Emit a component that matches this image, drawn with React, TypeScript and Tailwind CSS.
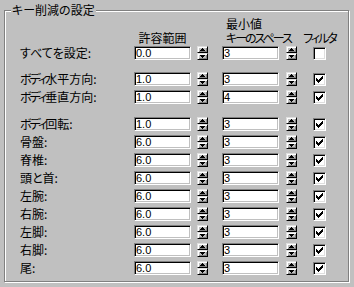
import React from 'react';

type Row = { label: React.ReactNode; key: string; tol: string; space: string; filter: boolean };

const Bodi = () => <span className="tracking-[-2px]">ボディ</span>;

const groups: Row[][] = [
  [{ key: 'all', label: 'すべてを設定:', tol: '0.0', space: '3', filter: false }],
  [
    { key: 'h', label: <><Bodi />水平方向:</>, tol: '1.0', space: '3', filter: true },
    { key: 'v', label: <><Bodi />垂直方向:</>, tol: '1.0', space: '4', filter: true },
  ],
  [
    { key: 'r', label: <><Bodi />回転:</>, tol: '1.0', space: '3', filter: true },
    { key: 'p', label: '骨盤:', tol: '6.0', space: '3', filter: true },
    { key: 's', label: '脊椎:', tol: '6.0', space: '3', filter: true },
    { key: 'n', label: '頭と首:', tol: '6.0', space: '3', filter: true },
    { key: 'la', label: '左腕:', tol: '6.0', space: '3', filter: true },
    { key: 'ra', label: '右腕:', tol: '6.0', space: '3', filter: true },
    { key: 'll', label: '左脚:', tol: '6.0', space: '3', filter: true },
    { key: 'rl', label: '右脚:', tol: '6.0', space: '3', filter: true },
    { key: 't', label: '尾:', tol: '6.0', space: '3', filter: true },
  ],
];

function SpinButton({ up }: { up?: boolean }) {
  return (
    <div className="flex h-[7px] w-[11px] items-center justify-center border border-t-[#dfdfdf] border-l-[#dfdfdf] border-r-black border-b-black bg-[#c0c0c0] shadow-[inset_1px_1px_0_#fff,inset_-1px_-1px_0_#808080]">
      <svg width="5" height="3" viewBox="0 0 5 3" className="shrink-0" shapeRendering="crispEdges">
        <path
          d={up ? 'M2 0h1v1h-1z M1 1h3v1h-3z M0 2h5v1h-5z' : 'M0 0h5v1h-5z M1 1h3v1h-3z M2 2h1v1h-1z'}
          fill="#000"
        />
      </svg>
    </div>
  );
}

function Spinner() {
  return (
    <div className="flex h-[14px] w-[11px] shrink-0 flex-col">
      <SpinButton up />
      <SpinButton />
    </div>
  );
}

function NumInput({ value }: { value: string }) {
  return (
    <div className="flex h-[14px] w-[57px] shrink-0 items-center border border-t-[#808080] border-l-[#808080] border-r-white border-b-white bg-white pl-[1px] font-['Liberation_Sans',sans-serif] text-[11px] leading-none text-black shadow-[inset_1px_1px_0_#000,inset_-1px_-1px_0_#c0c0c0]">
      {value}
    </div>
  );
}

function CheckBox({ checked }: { checked: boolean }) {
  const cols = [2, 3, 4, 3, 2, 1, 0];
  return (
    <div className="flex h-[13px] w-[13px] shrink-0 items-center justify-center border border-t-[#808080] border-l-[#808080] border-r-white border-b-white bg-white shadow-[inset_1px_1px_0_#000,inset_-1px_-1px_0_#dfdfdf]">
      {checked && (
        <svg width="7" height="7" viewBox="0 0 7 7" shapeRendering="crispEdges">
          {cols.map((y, x) => (
            <rect key={x} x={x} y={y} width="1" height="3" fill="#000" />
          ))}
        </svg>
      )}
    </div>
  );
}

function KeyRow({ row }: { row: Row }) {
  return (
    <div className="flex h-[14px] items-center">
      <div className="w-[114px] shrink-0 whitespace-nowrap text-[12px] leading-[14px]">{row.label}</div>
      <NumInput value={row.tol} />
      <div className="ml-[6px]">
        <Spinner />
      </div>
      <div className="ml-[14px]">
        <NumInput value={row.space} />
      </div>
      <div className="ml-[7px]">
        <Spinner />
      </div>
      <div className="ml-[16px]">
        <CheckBox checked={row.filter} />
      </div>
    </div>
  );
}

export default function App() {
  return (
    <div className="h-[287px] w-[354px] overflow-hidden bg-[#c0c0c0] px-[4px] pt-[3px] font-['Noto_Sans_CJK_JP',sans-serif] text-black [font-feature-settings:'palt']">
      <fieldset className="h-[279px] w-[345px] border border-[#808080] shadow-[inset_1px_1px_0_#fff,1px_1px_0_#fff]">
        <legend className="ml-[6px] bg-[#c0c0c0] px-[1px] text-[12px] leading-[14px]">キー削減の設定</legend>

        <div className="pl-[15px]">
          {/* column headers */}
          <div className="flex h-[28px] items-end text-[12px] leading-[14px]">
            <div className="w-[114px] shrink-0" />
            <div className="w-[57px] shrink-0 whitespace-nowrap text-center">許容範囲</div>
            <div className="w-[31px] shrink-0" />
            <div className="w-[57px] shrink-0 whitespace-nowrap pl-[4px]">
              <div>最小値</div>
              <div className="tracking-[-2px]">キーのスペース</div>
            </div>
            <div className="w-[34px] shrink-0" />
            <div className="flex w-[13px] shrink-0 justify-center whitespace-nowrap tracking-[-2px]">フィルタ</div>
          </div>

          <div className="mt-[1px] flex flex-col gap-[4px]">
            {groups[0].map((r) => (
              <KeyRow key={r.key} row={r} />
            ))}
          </div>
          <div className="mt-[12px] flex flex-col gap-[4px]">
            {groups[1].map((r) => (
              <KeyRow key={r.key} row={r} />
            ))}
          </div>
          <div className="mt-[13px] flex flex-col gap-[4px]">
            {groups[2].map((r) => (
              <KeyRow key={r.key} row={r} />
            ))}
          </div>
        </div>
      </fieldset>
    </div>
  );
}
